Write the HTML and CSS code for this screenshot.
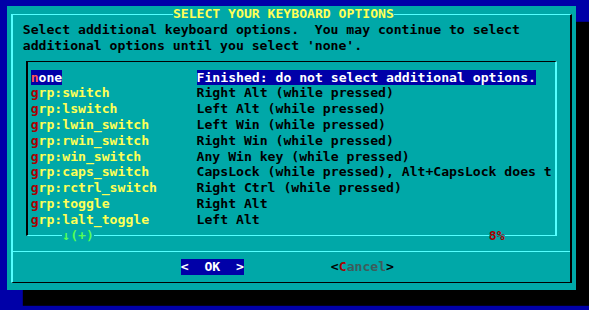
FILE: index.html
```html
<!DOCTYPE html>
<html lang="en">
<head>
    <meta charset="UTF-8">
    <meta name="viewport" content="width=device-width, initial-scale=1.0">
    <title>Select your keyboard options</title>
    <link rel="stylesheet" href="styles.css">
</head>
<body>
    <div class="screen">
        <div class="dialog">
            <div class="frame">
                <div class="title">SELECT YOUR KEYBOARD OPTIONS</div>
                <p class="prompt">Select additional keyboard options.  You may continue to select<br>additional options until you select 'none'.</p>

                <div class="listbox">
                    <ul class="items">
                        <li class="item selected">
                            <span class="tag"><span class="hot">n</span>one</span>
                            <span class="desc">Finished: do not select additional options.</span>
                        </li>
                        <li class="item">
                            <span class="tag"><span class="hot">g</span>rp:switch</span>
                            <span class="desc">Right Alt (while pressed)</span>
                        </li>
                        <li class="item">
                            <span class="tag"><span class="hot">g</span>rp:lswitch</span>
                            <span class="desc">Left Alt (while pressed)</span>
                        </li>
                        <li class="item">
                            <span class="tag"><span class="hot">g</span>rp:lwin_switch</span>
                            <span class="desc">Left Win (while pressed)</span>
                        </li>
                        <li class="item">
                            <span class="tag"><span class="hot">g</span>rp:rwin_switch</span>
                            <span class="desc">Right Win (while pressed)</span>
                        </li>
                        <li class="item">
                            <span class="tag"><span class="hot">g</span>rp:win_switch</span>
                            <span class="desc">Any Win key (while pressed)</span>
                        </li>
                        <li class="item">
                            <span class="tag"><span class="hot">g</span>rp:caps_switch</span>
                            <span class="desc">CapsLock (while pressed), Alt+CapsLock does t</span>
                        </li>
                        <li class="item">
                            <span class="tag"><span class="hot">g</span>rp:rctrl_switch</span>
                            <span class="desc">Right Ctrl (while pressed)</span>
                        </li>
                        <li class="item">
                            <span class="tag"><span class="hot">g</span>rp:toggle</span>
                            <span class="desc">Right Alt</span>
                        </li>
                        <li class="item">
                            <span class="tag"><span class="hot">g</span>rp:lalt_toggle</span>
                            <span class="desc">Left Alt</span>
                        </li>
                    </ul>
                    <div class="list-foot">
                        <span class="more">↓(+)</span>
                        <span class="pct">8%</span>
                    </div>
                </div>

                <div class="sep"></div>

                <div class="buttons">
                    <span class="btn active">&lt;  OK  &gt;</span>
                    <span class="btn">&lt;<span class="hot">C</span><span class="label">ancel</span>&gt;</span>
                </div>
            </div>
        </div>
    </div>
</body>
</html>
```

FILE: styles.css
```css
:root {
    --cw: 7.9px;
    --rh: 15.8px;
    --blue: #0000a8;
    --cyan: #00a8a8;
    --light: #55ffff;
    --dark: #000;
}

html, body {
    margin: 0;
    padding: 0;
}

body {
    background-color: var(--blue);
    width: 589px;
    height: 310px;
    overflow: hidden;
    font-family: "DejaVu Sans Mono", "Liberation Mono", monospace;
    font-size: 13.12px;
    font-weight: bold;
    line-height: var(--rh);
    color: #000;
}

.screen {
    padding: 6.1px 0 0 7px;
}

.dialog {
    box-sizing: border-box;
    width: calc(72 * var(--cw));
    height: calc(18 * var(--rh));
    padding: 7.9px 3.95px;
    background-color: var(--cyan);
    box-shadow: 15.8px 15.8px 0 #000;
}

.frame {
    box-sizing: border-box;
    height: 100%;
    padding-top: 6.9px;
    border-top: 1px solid var(--light);
    border-left: 2px solid var(--light);
    border-right: 2px solid var(--dark);
    border-bottom: 1px solid var(--dark);
}

.title {
    width: fit-content;
    height: var(--rh);
    margin: calc(-1 * var(--rh)) 0 0 159.95px;
    background-color: var(--cyan);
    color: #ffff55;
    white-space: pre;
}

.prompt {
    margin: 0 0 0 9.85px;
    white-space: pre;
}

.listbox {
    box-sizing: border-box;
    width: 531.25px;
    height: 175.3px;
    margin: 7.4px 0 0 12.8px;
    padding: 7.8px 0 0 2.95px;
    border-top: 1px solid var(--dark);
    border-left: 2px solid var(--dark);
    border-right: 2px solid var(--light);
    border-bottom: 1px solid var(--light);
}

.items {
    list-style: none;
    margin: 0;
    padding: 0;
}

.item {
    display: grid;
    grid-template-columns: calc(21 * var(--cw)) auto;
    justify-items: start;
    height: var(--rh);
    white-space: pre;
}

.tag {
    color: #ffff55;
}

.tag .hot {
    color: #a80000;
}

.selected .tag,
.selected .desc {
    background-color: var(--blue);
    color: #fff;
}

.selected .tag .hot {
    color: #ff5555;
}

.list-foot {
    display: flex;
    height: var(--rh);
    white-space: pre;
}

.more {
    margin-left: calc(4 * var(--cw));
    background-color: var(--cyan);
    color: #55ff55;
}

.pct {
    margin-left: calc(50 * var(--cw));
    background-color: var(--cyan);
    color: #a80000;
}

.sep {
    height: 1px;
    margin-top: 14.8px;
    background-color: var(--light);
}

.buttons {
    display: flex;
    height: var(--rh);
    margin: 6.9px 0 0 167.85px;
    white-space: pre;
}

.btn.active {
    background-color: var(--blue);
    color: #fff;
}

.btn + .btn {
    margin-left: calc(11 * var(--cw));
}

.btn .hot {
    color: #a80000;
}

.btn .label {
    color: #3d5c5c;
}
```
